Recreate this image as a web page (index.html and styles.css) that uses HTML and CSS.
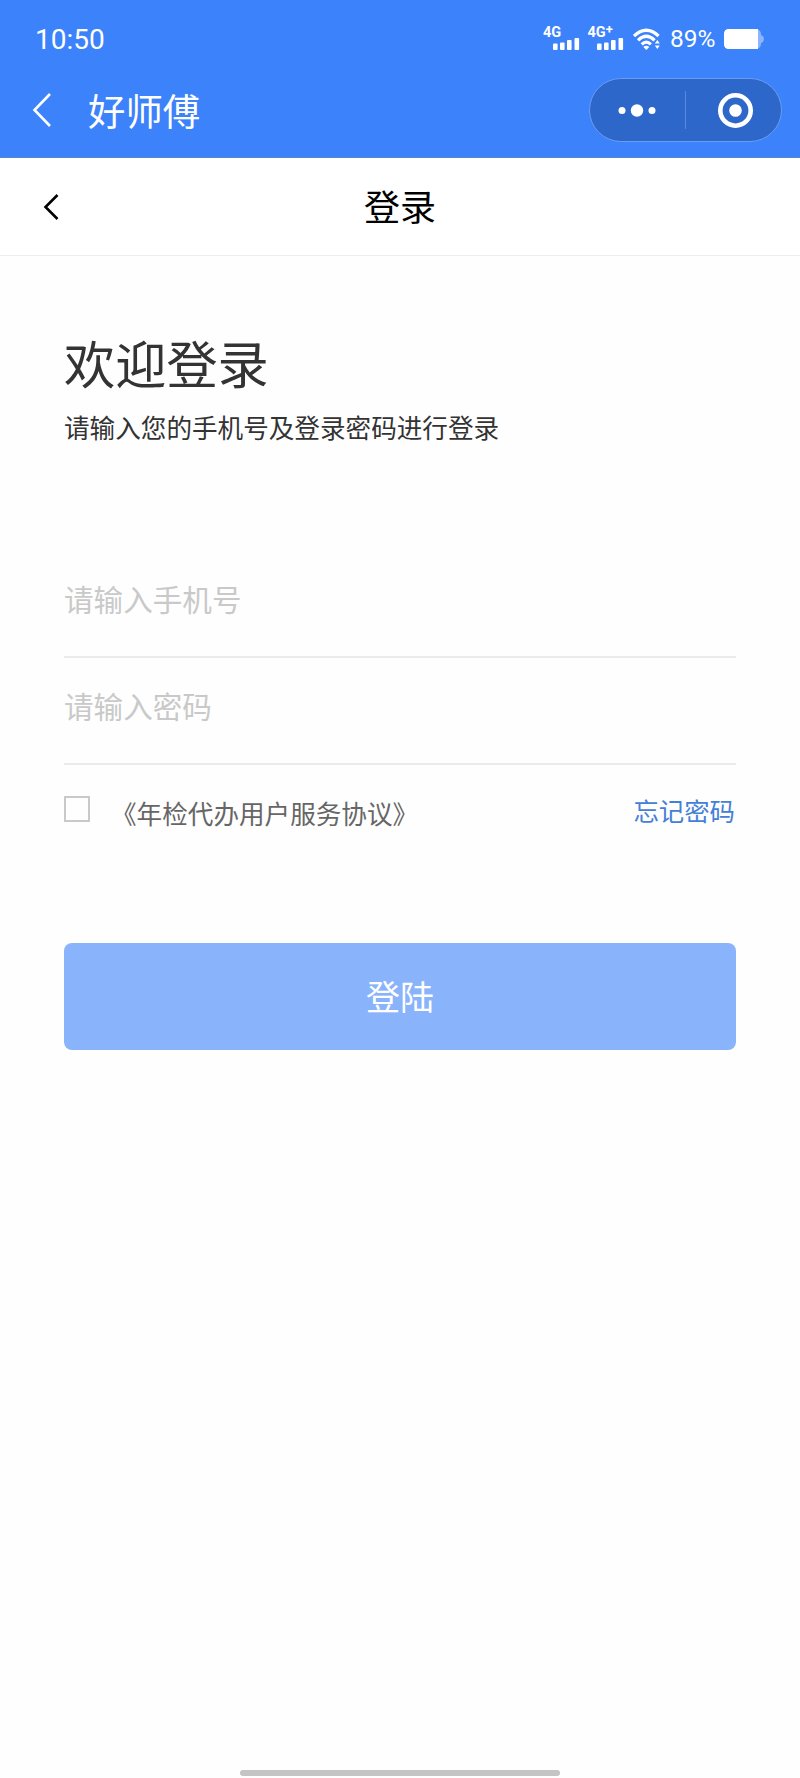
FILE: index.html
```html
<!DOCTYPE html>
<html lang="zh-CN">
<head>
    <meta charset="UTF-8">
    <meta name="viewport" content="width=device-width, initial-scale=1.0">
    <title>登录</title>
    <link rel="stylesheet" href="styles.css">
</head>
<body>
    <header class="app-header">
        <div class="status-bar">
            <span class="time">10:50</span>
            <div class="status-icons">
                <div class="signal">
                    <span class="net">4G</span>
                    <svg width="27" height="12" viewBox="0 0 27 12" fill="#fff">
                        <rect x="0" y="5.5" width="4.6" height="6.5" rx="1"/>
                        <rect x="7" y="4.5" width="4.6" height="7.5" rx="1"/>
                        <rect x="14" y="2" width="4.6" height="10" rx="1"/>
                        <rect x="21.5" y="0" width="4.6" height="12" rx="1"/>
                    </svg>
                </div>
                <div class="signal">
                    <span class="net">4G<sup>+</sup></span>
                    <svg width="27" height="12" viewBox="0 0 27 12" fill="#fff">
                        <rect x="0" y="5.5" width="4.6" height="6.5" rx="1"/>
                        <rect x="7" y="4.5" width="4.6" height="7.5" rx="1"/>
                        <rect x="14" y="2" width="4.6" height="10" rx="1"/>
                        <rect x="21.5" y="0" width="4.6" height="12" rx="1"/>
                    </svg>
                </div>
                <svg class="wifi" width="28" height="24" viewBox="0 0 28 24" fill="none" stroke="#fff" stroke-width="3.2">
                    <path d="M1 9Q13.3 -2.6 25.6 9"/>
                    <path d="M5 13.3Q13.3 5.3 21.6 13.3"/>
                    <path d="M8.7 17.3Q13.3 13 17.9 17.3"/>
                    <path d="M10.3 20Q13.3 17.6 16.3 20L13.3 23Z" fill="#fff" stroke="none"/>
                    <path d="M21.8 16.5L24.3 13L26.8 16.5ZM21.8 18.5L24.3 22L26.8 18.5Z" fill="#fff" stroke="none"/>
                </svg>
                <span class="battery-text">89%</span>
                <svg class="battery" width="40" height="20" viewBox="0 0 40 20">
                    <rect x="0" y="0" width="37" height="20" rx="5" fill="#8bb5fc"/>
                    <path d="M37 6Q40 7 40 10Q40 13 37 14Z" fill="#8bb5fc"/>
                    <path d="M5 0H34V20H5Q0 20 0 15V5Q0 0 5 0Z" fill="#fff"/>
                </svg>
            </div>
        </div>
        <div class="app-bar">
            <svg class="app-back" width="20" height="36" viewBox="0 0 20 36" fill="none" stroke="#fff" stroke-width="2.6">
                <path d="M18 2L2.5 18L18 34"/>
            </svg>
            <span class="app-name">好师傅</span>
            <div class="capsule">
                <svg width="191" height="62" viewBox="0 0 191 62" fill="#fff">
                    <circle cx="32" cy="31.5" r="3.5"/>
                    <circle cx="47" cy="31.5" r="6.2"/>
                    <circle cx="62" cy="31.5" r="3.5"/>
                    <rect x="95" y="12" width="1" height="38" fill="#5a8ae0"/>
                    <circle cx="145.5" cy="31.5" r="15.2" fill="none" stroke="#fff" stroke-width="4.6"/>
                    <circle cx="145.5" cy="31.5" r="6.3"/>
                </svg>
            </div>
        </div>
    </header>

    <nav class="page-nav">
        <svg class="page-back" width="16" height="28" viewBox="0 0 16 28" fill="none" stroke="#000" stroke-width="2.6">
            <path d="M14.5 2L2.5 14L14.5 26"/>
        </svg>
        <span class="page-title">登录</span>
    </nav>

    <main class="login">
        <h1>欢迎登录</h1>
        <p class="subtitle">请输入您的手机号及登录密码进行登录</p>

        <form>
            <input type="tel" class="field" placeholder="请输入手机号">
            <input type="password" class="field" placeholder="请输入密码">
            <div class="options">
                <label class="agree">
                    <input type="checkbox" class="checkbox">
                    <span>《年检代办用户服务协议》</span>
                </label>
                <a class="forgot">忘记密码</a>
            </div>
            <button type="button" class="btn-login">登陆</button>
        </form>
    </main>

    <div class="home-bar"></div>
</body>
</html>
```

FILE: styles.css
```css
* {
    margin: 0;
    padding: 0;
    box-sizing: border-box;
}

body {
    font-family: "Noto Sans CJK SC", sans-serif;
    background: #fefefe;
    color: #333;
    height: 1778px;
    display: flex;
    flex-direction: column;
    overflow: hidden;
}

.app-header {
    height: 158px;
    background: #3c82fa;
    border-bottom: 1px solid #5a87c8;
    color: #fff;
}

.status-bar {
    height: 78px;
    padding: 0 36px 0 35px;
    display: flex;
    align-items: center;
    justify-content: space-between;
}

.time {
    font-family: Roboto, sans-serif;
    font-size: 28px;
    line-height: 32px;
    padding-top: 2px;
}

.status-icons {
    display: flex;
    align-items: center;
}

.signal {
    display: flex;
    flex-direction: column;
    width: 36px;
    margin-right: 8.5px;
    padding-bottom: 4px;
}

.signal svg {
    margin-top: -4px;
    margin-left: 8.5px;
}

.net {
    font-family: Roboto, sans-serif;
    font-size: 14.5px;
    font-weight: 700;
    line-height: 18px;
    margin-left: -1px;
    white-space: nowrap;
}

.net sup {
    font-size: 13px;
    line-height: 0;
    vertical-align: 3px;
}

.wifi {
    margin-right: 9px;
}

.battery-text {
    font-family: Roboto, sans-serif;
    font-size: 24.5px;
    line-height: 28px;
    width: 47px;
    margin-right: 7px;
}

.app-bar {
    height: 64px;
    padding: 0 18px 0 32px;
    display: flex;
    align-items: center;
}

.app-name {
    margin-left: 36px;
    font-size: 37.4px;
    line-height: 64px;
}

.capsule {
    width: 193px;
    height: 64px;
    margin-left: auto;
    background: #2d67c9;
    border: 1px solid #6a9cf0;
    border-radius: 32px;
}

.capsule svg {
    display: block;
}

.page-nav {
    height: 98px;
    padding: 0 43px;
    background: #fff;
    border-bottom: 1px solid #ededed;
    color: #000;
    display: grid;
    grid-template-columns: 1fr auto 1fr;
    align-items: center;
}

.page-title {
    font-size: 36px;
    line-height: 48px;
    padding-bottom: 4px;
}

.login {
    padding: 70px 64px 0;
}

h1 {
    font-size: 51.2px;
    font-weight: 400;
    line-height: 72px;
}

.subtitle {
    font-size: 25.6px;
    line-height: 36px;
    margin-top: 11px;
    margin-bottom: 106px;
}

.field {
    display: block;
    width: 100%;
    height: 107px;
    padding-bottom: 10px;
    border: none;
    border-bottom: 2px solid #ebebeb;
    background: none;
    font-family: inherit;
    font-size: 29.6px;
    outline: none;
}

.field::placeholder {
    color: #c9c9c9;
}

.options {
    display: flex;
    justify-content: space-between;
    margin-top: 31px;
}

.agree {
    display: flex;
    color: #666;
    font-size: 25.6px;
    line-height: 34px;
}

.checkbox {
    appearance: none;
    width: 26px;
    height: 26px;
    margin-right: 21px;
    border: 2px solid #c9c9c9;
}

.forgot {
    color: #4480d6;
    font-size: 25.4px;
    line-height: 28px;
    padding-right: 1px;
}

.btn-login {
    display: block;
    width: 100%;
    height: 107px;
    margin-top: 113px;
    padding-bottom: 2px;
    border: none;
    border-radius: 8px;
    background: #89b3fa;
    color: #fff;
    font-family: inherit;
    font-size: 34px;
}

.home-bar {
    width: 320px;
    height: 6px;
    margin: auto auto 2px;
    border-radius: 3px;
    background: #c4c4c4;
}
```
